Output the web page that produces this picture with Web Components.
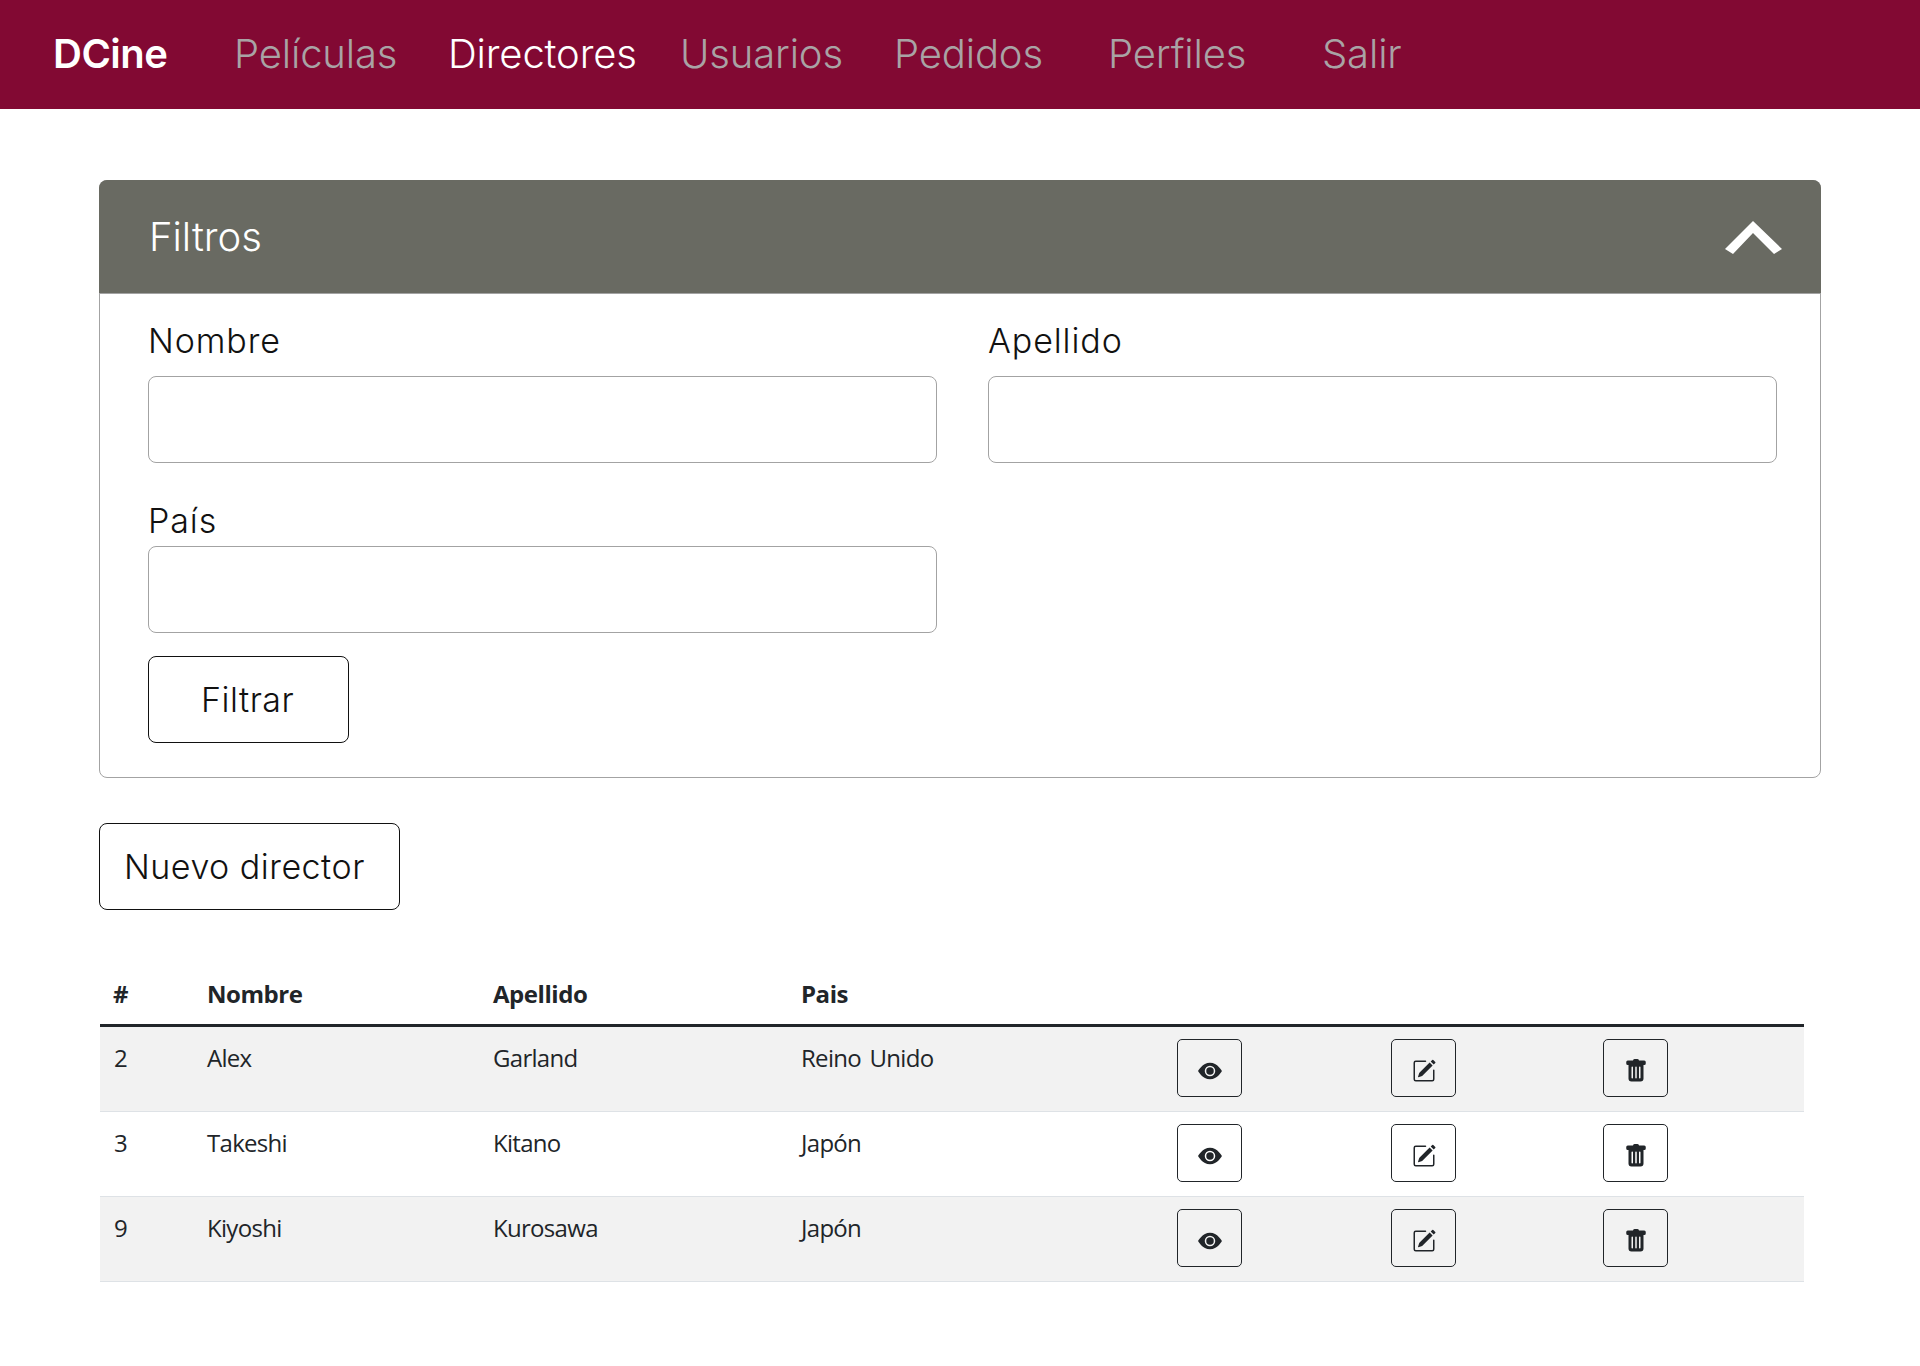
<!DOCTYPE html>
<html lang="es">
<head>
<meta charset="utf-8">
<title>DCine</title>
<style>
  html, body { margin: 0; background: #fff; }
  body { font-family: "Inter", "Liberation Sans", sans-serif; color: #212529; }
</style>
</head>
<body>
<app-navbar></app-navbar>
<page-main>
  <filter-card></filter-card>
  <outline-button class="nuevo" pad="24 34" style="margin-top:45px">Nuevo director</outline-button>
  <director-table></director-table>
</page-main>

<script>
const RAW = 'Inter, "Liberation Sans", sans-serif';
const ICONS = {
  eye: '<path d="M10.5 8a2.5 2.5 0 1 1-5 0 2.5 2.5 0 0 1 5 0z"/><path d="M0 8s3-5.5 8-5.5S16 8 16 8s-3 5.5-8 5.5S0 8 0 8zm8 3.5a3.5 3.5 0 1 0 0-7 3.5 3.5 0 0 0 0 7z"/>',
  edit: '<path d="M15.502 1.94a.5.5 0 0 1 0 .706L14.459 3.69l-2-2L13.502.646a.5.5 0 0 1 .707 0l1.293 1.293zm-1.75 2.456-2-2L4.939 9.21a.5.5 0 0 0-.121.196l-.805 2.414a.25.25 0 0 0 .316.316l2.414-.805a.5.5 0 0 0 .196-.12l6.813-6.814z"/><path fill-rule="evenodd" d="M1 13.5A1.5 1.5 0 0 0 2.5 15h11a1.5 1.5 0 0 0 1.5-1.5v-6a.5.5 0 0 0-1 0v6a.5.5 0 0 1-.5.5h-11a.5.5 0 0 1-.5-.5v-11a.5.5 0 0 1 .5-.5H9a.5.5 0 0 0 0-1H2.5A1.5 1.5 0 0 0 1 2.5v11z"/>',
  trash: '<path d="M2.5 1a1 1 0 0 0-1 1v1a1 1 0 0 0 1 1H3v9a2 2 0 0 0 2 2h6a2 2 0 0 0 2-2V4h.5a1 1 0 0 0 1-1V2a1 1 0 0 0-1-1H10a1 1 0 0 0-1-1H7a1 1 0 0 0-1 1H2.5zm3 4a.5.5 0 0 1 .5.5v7a.5.5 0 0 1-1 0v-7a.5.5 0 0 1 .5-.5zM8 5a.5.5 0 0 1 .5.5v7a.5.5 0 0 1-1 0v-7A.5.5 0 0 1 8 5zm3 .5v7a.5.5 0 0 1-1 0v-7a.5.5 0 0 1 1 0z"/>'
};

class AppNavbar extends HTMLElement {
  connectedCallback() {
    const links = [['Películas', 214], ['Directores', 232, true], ['Usuarios', 214], ['Pedidos', 214], ['Perfiles', 214], ['Salir', 100]];
    const items = links.map(l =>
      `<a style="flex-basis:${l[1]}px" class="${l[2] ? 'on' : ''}">${l[0]}</a>`).join('');
    this.attachShadow({ mode: 'open' }).innerHTML = `<style>
      :host { display: flex; align-items: center; height: 109px; box-sizing: border-box; padding: 0 0 1px 53px; background: #820933; font: 300 40px/1 ${RAW}; letter-spacing: -.15px; color: #a9a3a5; }
      .brand { flex: 0 0 181px; font-weight: 600; letter-spacing: -.5px; color: #fff; }
      a { flex: 0 0 auto; }
      a.on { color: #fff; }
    </style>
    <span class="brand">DCine</span>${items}`;
  }
}

class PageMain extends HTMLElement {
  connectedCallback() {
    this.attachShadow({ mode: 'open' }).innerHTML = `<style>
      :host { display: block; padding: 71px 99px 0; }
    </style><slot></slot>`;
  }
}

class FormField extends HTMLElement {
  connectedCallback() {
    this.attachShadow({ mode: 'open' }).innerHTML = `<style>
      :host { display: block; }
      label { display: block; font: 300 34px/44px ${RAW}; letter-spacing: .9px; color: #111; margin-bottom: var(--gap, 0); }
      .input { height: 85px; border: 1px solid #a3a3a3; border-radius: 8px; background: #fff; }
    </style>
    <label>${this.getAttribute('label')}</label>
    <div class="input"></div>`;
  }
}

class OutlineButton extends HTMLElement {
  connectedCallback() {
    const pad = (this.getAttribute('pad') || '52 54').split(' ');
    this.attachShadow({ mode: 'open' }).innerHTML = `<style>
      :host { display: inline-flex; align-items: center; height: 85px; padding: 0 ${pad[1]}px 0 ${pad[0]}px; border: 1px solid #111; border-radius: 8px; font: 300 34px/1 ${RAW}; letter-spacing: .5px; color: #111; background: #fff; }
    </style><slot></slot>`;
  }
}

class FilterCard extends HTMLElement {
  connectedCallback() {
    this.attachShadow({ mode: 'open' }).innerHTML = `<style>
      :host { display: block; border: 1px solid #a3a3a3; border-radius: 8px; }
      header { display: flex; align-items: center; justify-content: space-between; height: 113px; margin: -1px -1px 0; padding: 0 39px 0 50px; background: #696a62; border-radius: 8px 8px 0 0; border-bottom: 1px solid #a3a3a3; font: 300 40px/1 ${RAW}; color: #fff; }
      svg { display: block; }
      .body { padding: 25px 43px 34px 48px; }
      .grid { display: grid; grid-template-columns: 789px 789px; column-gap: 51px; }
      .first { --gap: 13px; margin-bottom: 36px; }
      .second { --gap: 3px; }
      .btn { margin-top: 23px; }
    </style>
    <header><span>Filtros</span>
      <svg width="58" height="34" viewBox="0 0 58 34" fill="#fff"><polygon points="29,1 58,29 50,34 29,13 9,34 1,29"/></svg>
    </header>
    <div class="body">
      <div class="grid">
        <form-field class="first" label="Nombre"></form-field>
        <form-field class="first" label="Apellido"></form-field>
        <form-field class="second" label="País"></form-field>
      </div>
      <outline-button class="btn">Filtrar</outline-button>
    </div>`;
  }
}

class IconButton extends HTMLElement {
  connectedCallback() {
    this.attachShadow({ mode: 'open' }).innerHTML = `<style>
      :host { display: flex; align-items: center; justify-content: center; width: 63px; height: 56px; border: 1px solid #212529; border-radius: 5px; }
      svg { display: block; margin-top: 5px; }
    </style>
    <svg width="24" height="24" viewBox="0 0 16 16" fill="#212529">${ICONS[this.getAttribute('icon')]}</svg>`;
  }
}

class DirectorRow extends HTMLElement {
  connectedCallback() {
    const c = ['num', 'nombre', 'apellido', 'pais'].map(k => `<div class="t">${this.getAttribute(k)}</div>`).join('');
    const b = ['eye', 'edit', 'trash'].map(i => `<div><icon-button icon="${i}"></icon-button></div>`).join('');
    this.attachShadow({ mode: 'open' }).innerHTML = `<style>
      :host { display: grid; grid-template-columns: var(--cols); height: 85px; box-sizing: border-box; border-bottom: 1px solid #dee2e6; font: 400 24px/36px "Open Sans", sans-serif; letter-spacing: -.7px; word-spacing: 3px; color: #212529; }
      :host([striped]) { background: #f2f2f2; }
      div { padding: 12px; }
      .t { padding-top: 13px; }
      .t:nth-of-type(1) { padding-left: 14px; }
    </style>${c}${b}`;
  }
}

class DirectorTable extends HTMLElement {
  connectedCallback() {
    const rows = [
      ['2', 'Alex', 'Garland', 'Reino Unido'],
      ['3', 'Takeshi', 'Kitano', 'Japón'],
      ['9', 'Kiyoshi', 'Kurosawa', 'Japón']
    ];
    const html = rows.map((r, i) =>
      `<director-row ${i % 2 === 0 ? 'striped' : ''} num="${r[0]}" nombre="${r[1]}" apellido="${r[2]}" pais="${r[3]}"></director-row>`).join('');
    this.attachShadow({ mode: 'open' }).innerHTML = `<style>
      :host { display: block; margin: 54px 17px 0 1px; --cols: 95px 286px 308px 376px 214px 212px 213px; }
      .head { display: grid; grid-template-columns: var(--cols); border-bottom: 3px solid #212529; font: 700 24px/36px "Open Sans", sans-serif; letter-spacing: -.45px; color: #212529; }
      .head div { padding: 12px; }
      .head div:first-child { padding-left: 13px; }
    </style>
    <div class="head"><div>#</div><div>Nombre</div><div>Apellido</div><div>Pais</div></div>
    ${html}`;
  }
}

customElements.define('icon-button', IconButton);
customElements.define('form-field', FormField);
customElements.define('outline-button', OutlineButton);
customElements.define('director-row', DirectorRow);
customElements.define('director-table', DirectorTable);
customElements.define('filter-card', FilterCard);
customElements.define('page-main', PageMain);
customElements.define('app-navbar', AppNavbar);
</script>
</body>
</html>
